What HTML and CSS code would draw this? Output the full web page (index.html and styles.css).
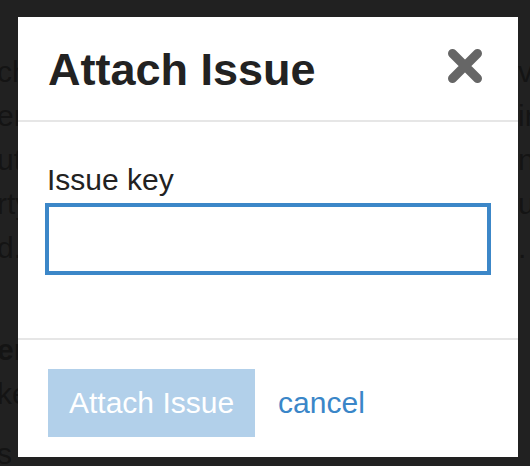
FILE: index.html
```html
<!DOCTYPE html>
<html lang="en">
<head>
    <meta charset="UTF-8">
    <meta name="viewport" content="width=device-width, initial-scale=1.0">
    <title>Attach Issue</title>
    <link rel="stylesheet" href="styles.css">
</head>
<body>

<div class="page">
    <div class="line"><span class="start">ch</span><span class="end">vi</span></div>
    <div class="line"><span class="start">era</span><span class="end">ir</span></div>
    <div class="line"><span class="start">ut</span><span class="end">na</span></div>
    <div class="line"><span class="start">rty</span><span class="end">u</span></div>
    <div class="line"><span class="start">d.</span><span class="end">.</span></div>
    <div class="line heading"><span class="start">er</span><span class="end"></span></div>
    <div class="line"><span class="start">ke</span><span class="end"></span></div>
    <div class="line last"><span class="start">s</span><span class="end"></span></div>
</div>

<div class="overlay"></div>

<div class="modal">
    <div class="modal-header">
        <h2>Attach Issue</h2>
        <button class="close" aria-label="Close">
            <svg width="34" height="34" viewBox="0 0 34 34">
                <path d="M4.5 4.5L29.5 29.5M29.5 4.5L4.5 29.5" stroke="#666" stroke-width="9" stroke-linecap="round" fill="none"/>
            </svg>
        </button>
    </div>

    <div class="modal-body">
        <label for="issueKey">Issue key</label>
        <input type="text" id="issueKey">
    </div>

    <div class="modal-footer">
        <button class="attach" disabled>Attach Issue</button>
        <a href="#" class="cancel">cancel</a>
    </div>
</div>

</body>
</html>
```

FILE: styles.css
```css
body {
    font-family: 'Liberation Sans', Arial, sans-serif;
    margin: 0;
    padding: 0;
    overflow: hidden;
    background-color: #ffffff;
    color: #9a9a9a;
}
.page {
    padding-top: 50px;
    font-size: 30px;
}
.line {
    display: flex;
    justify-content: space-between;
    height: 44px;
    line-height: 44px;
}
.line .start {
    width: 18px;
    overflow: hidden;
    white-space: nowrap;
    text-indent: -3px;
}
.line .end {
    width: 12px;
    overflow: hidden;
    white-space: nowrap;
}
.heading {
    margin-top: 58px;
    font-weight: bold;
}
.last {
    margin-top: 16px;
}
.overlay {
    position: fixed;
    top: 0;
    left: 0;
    width: 100%;
    height: 100%;
    background-color: rgba(0, 0, 0, 0.87);
}
.modal {
    position: fixed;
    top: 17px;
    left: 18px;
    width: 500px;
    height: 440px;
    background-color: #ffffff;
    color: #222222;
}
.modal-header {
    display: flex;
    justify-content: space-between;
    align-items: center;
    padding: 28px 36px 25px 30px;
    border-bottom: 2px solid #e6e6e6;
}
.modal-header h2 {
    margin: 0;
    font-size: 45px;
    line-height: 50px;
    font-weight: bold;
}
.close {
    display: block;
    width: 34px;
    height: 34px;
    margin-bottom: 8px;
    padding: 0;
    border: none;
    background: none;
    cursor: pointer;
}
.close svg {
    display: block;
}
.modal-body {
    padding: 41px 27px 63px;
}
.modal-body label {
    display: block;
    padding-left: 2px;
    font-size: 30px;
    line-height: 34px;
    color: #222222;
}
.modal-body input {
    display: block;
    box-sizing: border-box;
    width: 100%;
    height: 72px;
    margin-top: 6px;
    border: 4px solid #3c87c8;
    outline: none;
    font-size: 30px;
    padding: 0 12px;
}
.modal-footer {
    display: flex;
    align-items: center;
    gap: 23px;
    padding: 29px 30px 20px;
    border-top: 2px solid #e6e6e6;
}
.attach {
    height: 68px;
    padding: 0 21px;
    border: none;
    background-color: #b2d0ea;
    color: #ffffff;
    font-family: inherit;
    font-size: 30px;
    line-height: 68px;
    cursor: not-allowed;
}
.cancel {
    font-size: 30px;
    color: #3a86c8;
    text-decoration: none;
}
```
